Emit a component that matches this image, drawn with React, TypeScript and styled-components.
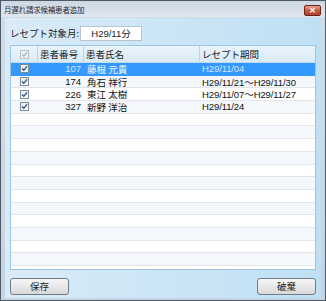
import styled, { createGlobalStyle } from 'styled-components';

type Patient = {
  no: number;
  name: string;
  period: string;
};

const patients: Patient[] = [
  { no: 107, name: '藤根 元貴', period: 'H29/11/04' },
  { no: 174, name: '角石 祥行', period: 'H29/11/21～H29/11/30' },
  { no: 226, name: '東江 太樹', period: 'H29/11/07～H29/11/27' },
  { no: 327, name: '新野 洋治', period: 'H29/11/24' },
];

const EMPTY_ROWS = 14;

const GlobalStyle = createGlobalStyle`
  body {
    margin: 0;
    font-family: 'Noto Sans CJK JP', 'Liberation Sans', sans-serif;
  }
`;

function Check({ disabled }: { disabled?: boolean }) {
  return (
    <CheckBox $disabled={disabled}>
      <svg width="7" height="7" viewBox="0 0 7 7">
        <path
          d="M1 3.5 L2.8 5.3 L6 1.3"
          fill="none"
          stroke={disabled ? '#a8b0b8' : '#2c4a7a'}
          strokeWidth="1.3"
        />
      </svg>
    </CheckBox>
  );
}

export default function App() {
  return (
    <>
      <GlobalStyle />
      <Window>
        <TitleBar>
          <Title>月遅れ請求候補患者追加</Title>
          <CloseButton>×</CloseButton>
        </TitleBar>
        <Client>
          <MonthRow>
            <Label>レセプト対象月:</Label>
            <MonthBox>H29/11分</MonthBox>
          </MonthRow>
          <Grid>
            <HeaderRow>
              <HeaderCell $w={27} $align="center">
                <Check disabled />
              </HeaderCell>
              <HeaderCell $w={46}>患者番号</HeaderCell>
              <HeaderCell $w={116}>患者氏名</HeaderCell>
              <HeaderCell $w={116}>レセプト期間</HeaderCell>
            </HeaderRow>
            {patients.map((p, i) => (
              <Row key={p.no} $selected={i === 0} $alt={i % 2 === 1}>
                <Cell $w={27} $align="center">
                  <Check />
                </Cell>
                <NumCell $w={46} $selected={i === 0}>{p.no}</NumCell>
                <Cell $w={116}>{p.name}</Cell>
                <PeriodCell $w={116} $selected={i === 0}>{p.period}</PeriodCell>
              </Row>
            ))}
            {Array.from({ length: EMPTY_ROWS }).map((_, i) => (
              <Row key={'e' + i} $alt={(i + patients.length) % 2 === 1} />
            ))}
          </Grid>
          <ButtonBar>
            <Button>保存</Button>
            <Button>破棄</Button>
          </ButtonBar>
        </Client>
      </Window>
    </>
  );
}

const Window = styled.div`
  width: 326px;
  height: 301px;
  box-sizing: border-box;
  border: 1px solid #4e5a66;
  background: linear-gradient(to bottom, #d3dde8, #c4d4e4);
  display: flex;
  flex-direction: column;
  overflow: hidden;
`;

const TitleBar = styled.div`
  height: 16px;
  display: flex;
  align-items: center;
  justify-content: space-between;
  padding: 0 4px 0 3px;
  background: linear-gradient(to bottom, #cdd7e2, #dfe7ef);
`;

const Title = styled.div`
  font-size: 7.5px;
  color: #1e2a36;
  letter-spacing: -0.2px;
`;

const CloseButton = styled.div`
  width: 17px;
  height: 11px;
  margin-top: 2px;
  box-sizing: border-box;
  border: 1px solid #6b2418;
  border-radius: 2px;
  background: linear-gradient(to bottom, #e8a08e, #c75a43 50%, #b0402a);
  color: #fff;
  font-family: 'DejaVu Sans', sans-serif;
  font-size: 9px;
  font-weight: bold;
  line-height: 9px;
  text-align: center;
`;

const Client = styled.div`
  flex: 1;
  margin: 1px 4px 2px 4px;
  padding: 7px 5px 2px 5px;
  display: flex;
  flex-direction: column;
  background: linear-gradient(to right, #d9ebf7, #bfe0f4);
`;

const MonthRow = styled.div`
  display: flex;
  align-items: center;
  height: 16px;
  gap: 3px;
`;

const Label = styled.div`
  width: 67px;
  font-size: 9.5px;
  color: #222;
  white-space: nowrap;
`;

const MonthBox = styled.div`
  width: 62px;
  height: 15px;
  box-sizing: border-box;
  background: #fff;
  border: 1px solid #b8c4d0;
  font-family: 'Liberation Sans', 'Noto Sans CJK JP', sans-serif;
  font-size: 9.5px;
  line-height: 13px;
  text-align: center;
  color: #222;
`;

const Grid = styled.div`
  margin-top: 4px;
  height: 225px;
  box-sizing: border-box;
  border: 1px solid #9dc6e6;
  background: #fff;
  overflow: hidden;
`;

const HeaderRow = styled.div`
  display: flex;
  height: 16px;
  background: linear-gradient(to bottom, #eaf4fc, #d8eaf8);
  border-bottom: 1px solid #c4d8e8;
`;

const HeaderCell = styled.div<{ $w: number; $align?: string }>`
  width: ${(p) => p.$w}px;
  flex: none;
  box-sizing: border-box;
  display: flex;
  align-items: center;
  justify-content: ${(p) => (p.$align === 'center' ? 'center' : 'flex-start')};
  padding-left: ${(p) => (p.$align === 'center' ? 0 : 2)}px;
  border-right: 1px solid #c0d4e4;
  font-size: 9.5px;
  color: #222;
  white-space: nowrap;
`;

const Row = styled.div<{ $selected?: boolean; $alt?: boolean }>`
  display: flex;
  height: 12.7px;
  box-sizing: border-box;
  border-bottom: 1px solid ${(p) => (p.$selected ? '#3399ff' : '#e2e6ea')};
  background: ${(p) => (p.$selected ? '#3399ff' : p.$alt ? '#f4f8fc' : '#fff')};
  color: ${(p) => (p.$selected ? '#f4f9ff' : '#111')};
`;

const Cell = styled.div<{ $w: number; $align?: string }>`
  width: ${(p) => p.$w}px;
  flex: none;
  box-sizing: border-box;
  display: flex;
  align-items: center;
  justify-content: ${(p) => (p.$align === 'center' ? 'center' : 'flex-start')};
  padding-left: ${(p) => (p.$align === 'center' ? 0 : 3)}px;
  font-size: 9.5px;
  white-space: nowrap;
`;

const NumCell = styled(Cell)<{ $selected?: boolean }>`
  justify-content: flex-end;
  padding-right: 3px;
  font-family: 'Liberation Sans', sans-serif;
  color: ${(p) => (p.$selected ? '#cfe6ff' : 'inherit')};
`;

const PeriodCell = styled(Cell)<{ $selected?: boolean }>`
  padding-left: 2px;
  font-family: 'Liberation Sans', 'Noto Sans CJK JP', sans-serif;
  letter-spacing: -0.1px;
  color: ${(p) => (p.$selected ? '#cfe6ff' : 'inherit')};
`;

const CheckBox = styled.span<{ $disabled?: boolean }>`
  width: 9px;
  height: 9px;
  box-sizing: border-box;
  border: 1px solid ${(p) => (p.$disabled ? '#b8c0c8' : '#7d8c9c')};
  background: ${(p) => (p.$disabled ? '#eef2f6' : 'linear-gradient(#e8ecf0, #fbfcfd)')};
  display: flex;
  align-items: center;
  justify-content: center;
`;

const ButtonBar = styled.div`
  margin-top: 8px;
  display: flex;
  justify-content: space-between;
`;

const Button = styled.div`
  width: 59px;
  height: 17px;
  box-sizing: border-box;
  border: 1px solid #707c88;
  border-radius: 3px;
  background: linear-gradient(to bottom, #f6f6f6, #e8e8e8 50%, #d8d8d8);
  font-size: 9.5px;
  line-height: 15px;
  text-align: center;
  color: #222;
`;
